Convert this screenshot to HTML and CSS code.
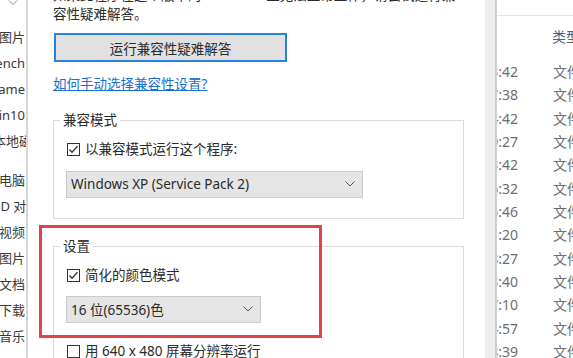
FILE: index.html
```html
<!DOCTYPE html>
<html lang="zh-CN">
<head>
  <meta charset="UTF-8">
  <meta name="viewport" content="width=device-width, initial-scale=1.0">
  <title>兼容性</title>
  <link rel="stylesheet" href="styles.css">
</head>
<body>
  <div class="nav">
    <svg class="nav-arrow" width="10" height="6" viewBox="0 0 10 6"><polyline points="1,0.5 5,4.5 9,0.5" /></svg>
    <div class="nav-item first">图片</div>
    <div class="nav-item">Workbench</div>
    <div class="nav-item">Game</div>
    <div class="nav-item">Win10</div>
    <div class="nav-item cut">本地磁盘 (C:)</div>
    <div class="nav-item pc">此电脑</div>
    <div class="nav-item cut">3D 对象</div>
    <div class="nav-item">视频</div>
    <div class="nav-item">图片</div>
    <div class="nav-item">文档</div>
    <div class="nav-item">下载</div>
    <div class="nav-item">音乐</div>
  </div>

  <div class="dialog">
    <p class="intro">如果此程序在这个版本的 Windows 上无法正常工作，请尝试运行兼<br>容性疑难解答。</p>
    <button class="run-btn">运行兼容性疑难解答</button>
    <a class="help-link" href="#">如何手动选择兼容性设置?</a>

    <fieldset class="group group-compat">
      <legend>兼容模式</legend>
      <div class="check">
        <svg class="box" width="13" height="13" viewBox="0 0 13 13"><rect x="0.5" y="0.5" width="12" height="12" /><polyline class="tick" points="2.5,6.5 5,9.2 10.5,3.2" /></svg>
        <span>以兼容模式运行这个程序:</span>
      </div>
      <div class="dropdown wide">
        <span>Windows XP (Service Pack 2)</span>
        <svg class="chev" width="10" height="6" viewBox="0 0 10 6"><polyline points="0.5,0.5 5,5 9.5,0.5" /></svg>
      </div>
    </fieldset>

    <fieldset class="group group-settings">
      <legend>设置</legend>
      <div class="check">
        <svg class="box" width="13" height="13" viewBox="0 0 13 13"><rect x="0.5" y="0.5" width="12" height="12" /><polyline class="tick" points="2.5,6.5 5,9.2 10.5,3.2" /></svg>
        <span>简化的颜色模式</span>
      </div>
      <div class="dropdown narrow">
        <span>16 位(65536)色</span>
        <svg class="chev" width="10" height="6" viewBox="0 0 10 6"><polyline points="0.5,0.5 5,5 9.5,0.5" /></svg>
      </div>
      <div class="check last">
        <svg class="box" width="13" height="13" viewBox="0 0 13 13"><rect x="0.5" y="0.5" width="12" height="12" /></svg>
        <span>用 640 x 480 屏幕分辨率运行</span>
      </div>
    </fieldset>

    <div class="highlight"></div>
  </div>

  <div class="shade"></div>

  <div class="files">
    <div class="files-top"></div>
    <div class="files-head"><span class="col-sep"></span><span class="col-title">类型</span></div>
    <div class="file-row"><span class="time">3:42</span><span class="type">文件夹</span></div>
    <div class="file-row"><span class="time">7:38</span><span class="type">文件夹</span></div>
    <div class="file-row"><span class="time">4:42</span><span class="type">文件夹</span></div>
    <div class="file-row"><span class="time">9:27</span><span class="type">文件夹</span></div>
    <div class="file-row"><span class="time">3:42</span><span class="type">文件夹</span></div>
    <div class="file-row"><span class="time">6:32</span><span class="type">文件夹</span></div>
    <div class="file-row"><span class="time">5:46</span><span class="type">文件夹</span></div>
    <div class="file-row"><span class="time">1:20</span><span class="type">文件夹</span></div>
    <div class="file-row"><span class="time">8:27</span><span class="type">文件夹</span></div>
    <div class="file-row"><span class="time">3:40</span><span class="type">文件夹</span></div>
    <div class="file-row"><span class="time">7:10</span><span class="type">文件夹</span></div>
    <div class="file-row"><span class="time">4:57</span><span class="type">文件夹</span></div>
    <div class="file-row"><span class="time">8:39</span><span class="type">文件夹</span></div>
  </div>
</body>
</html>
```

FILE: styles.css
```css
* { box-sizing: border-box; }
body {
  margin: 0;
  height: 358px;
  overflow: hidden;
  display: flex;
  background: #fff;
  color: #2b2b2b;
  font-family: "Noto Sans", "Noto Sans CJK SC", sans-serif;
  font-size: 13.5px;
}

/* left tree, mostly hidden behind the dialog */
.nav {
  width: 28px;
  flex-shrink: 0;
  border-right: 2px solid #d6d6d6;
  overflow: hidden;
  color: #3a3a3a;
  font-size: 13px;
}
.nav-arrow {
  display: block;
  margin-left: 8px;
  fill: none;
  stroke: #888;
  stroke-width: 1;
}
.nav-item {
  height: 26px;
  line-height: 26px;
  display: flex;
  justify-content: flex-end;
  white-space: nowrap;
  padding-right: 1px;
}
.nav-item.first { margin-top: 18px; }
.nav-item.cut {
  justify-content: flex-start;
  margin-left: -7px;
}
.nav-item.pc { margin-top: 13px; }

/* properties dialog */
.dialog {
  position: relative;
  width: 457px;
  flex-shrink: 0;
  padding-left: 25px;
}
.intro {
  margin: -14.5px 0 0;
  line-height: 19px;
  white-space: nowrap;
}
.run-btn {
  display: block;
  margin: 9.5px 0 0 1px;
  width: 233px;
  height: 29px;
  padding: 0;
  background: #e1e1e1;
  border: 2px solid #2b83d9;
  color: #2b2b2b;
  font-family: inherit;
  font-size: 13.5px;
}
.help-link {
  display: block;
  width: fit-content;
  margin-top: 12.5px;
  line-height: 19px;
  color: #1a6fcf;
}
.group {
  width: 411px;
  margin: 0;
  padding: 0 0 20px 12px;
  border: 1px solid #dcdcdc;
  min-width: 0;
}
.group legend {
  padding: 0 3px;
  margin-left: -6px;
  line-height: 19px;
}
.group-compat { margin-top: 17.5px; }
.group-settings { margin-top: 18px; }

.check {
  display: flex;
  align-items: center;
  gap: 5px;
  height: 19px;
  line-height: 19px;
  margin-top: 10px;
}
.group-settings .check { margin-top: 10.5px; }
.group-settings .check.last { margin-top: 19.5px; }
.box { flex-shrink: 0; margin-left: 1px; }
.box rect { fill: #fff; stroke: #333; stroke-width: 1; }
.box .tick { fill: none; stroke: #333; stroke-width: 1.3; }

.dropdown {
  display: flex;
  align-items: center;
  justify-content: space-between;
  height: 27px;
  margin-top: 11.5px;
  padding: 0 7px 0 4px;
  background: #e5e5e5;
  border: 1px solid #cbcbcb;
  white-space: nowrap;
}
.dropdown.wide { width: 297px; }
.dropdown.narrow { width: 195px; margin-top: 10.5px; }
.chev { fill: none; stroke: #555; stroke-width: 1; }

.highlight {
  position: absolute;
  left: 11px;
  top: 225px;
  width: 283px;
  height: 113px;
  border: 3px solid #e2434b;
}

.shade {
  width: 12px;
  flex-shrink: 0;
  background: #eeeeee;
  border-right: 2px solid #d0d0d0;
}

/* explorer file list behind */
.files {
  flex: 1;
  overflow: hidden;
  color: #6d6d6d;
  font-size: 14px;
}
.files-top {
  height: 16px;
  border-bottom: 1px solid #e5e5e5;
}
.files-head {
  display: flex;
  height: 44px;
  padding-top: 8px;
}
.col-sep {
  width: 1px;
  height: 28px;
  margin-left: 50px;
  background: #e3e3e3;
}
.col-title {
  margin-left: 5px;
  line-height: 26px;
  color: #4c607a;
  white-space: nowrap;
}
.file-row {
  display: flex;
  height: 23.33px;
  line-height: 23.33px;
  white-space: nowrap;
}
.time {
  width: 21px;
  display: flex;
  justify-content: flex-end;
  overflow: hidden;
  flex-shrink: 0;
}
.type { margin-left: 35px; }
```
